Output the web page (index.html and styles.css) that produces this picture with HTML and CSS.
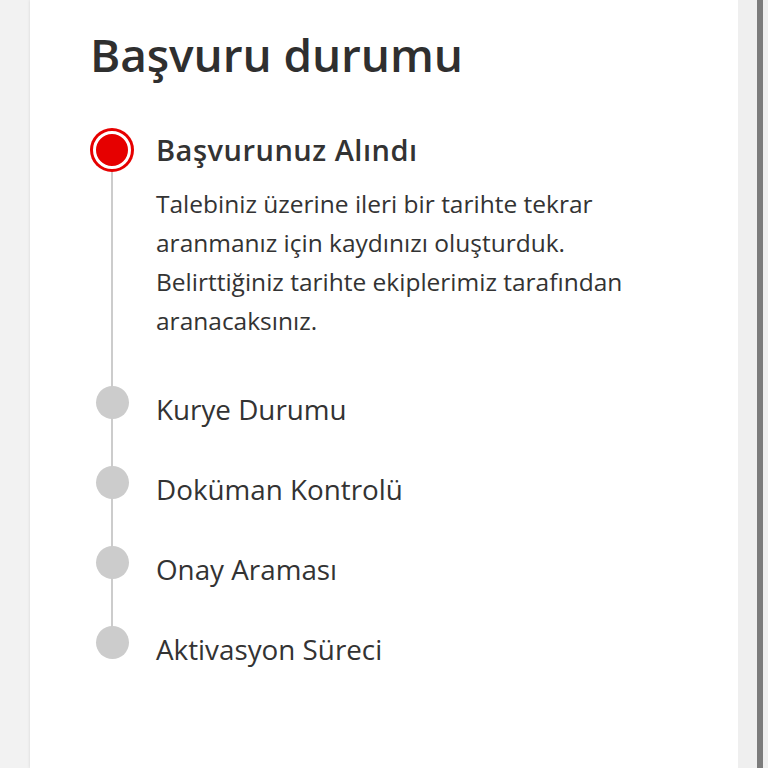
FILE: index.html
```html
<!DOCTYPE html>
<html lang="tr">
<head>
    <meta charset="UTF-8">
    <meta name="viewport" content="width=device-width, initial-scale=1.0">
    <title>Başvuru durumu</title>
    <link rel="stylesheet" href="styles.css">
</head>
<body>
    <div class="page">
        <div class="card">
            <h1 class="title">Başvuru durumu</h1>

            <ol class="steps">
                <li class="step active">
                    <span class="marker"></span>
                    <div class="step-body">
                        <h2 class="step-title">Başvurunuz Alındı</h2>
                        <p class="step-text">Talebiniz üzerine ileri bir tarihte tekrar aranmanız için kaydınızı oluşturduk. Belirttiğiniz tarihte ekiplerimiz tarafından aranacaksınız.</p>
                    </div>
                </li>
                <li class="step">
                    <span class="marker"></span>
                    <div class="step-body">Kurye Durumu</div>
                </li>
                <li class="step">
                    <span class="marker"></span>
                    <div class="step-body">Doküman Kontrolü</div>
                </li>
                <li class="step">
                    <span class="marker"></span>
                    <div class="step-body">Onay Araması</div>
                </li>
                <li class="step">
                    <span class="marker"></span>
                    <div class="step-body">Aktivasyon Süreci</div>
                </li>
            </ol>
        </div>
        <div class="scroll-track">
            <div class="scroll-thumb"></div>
        </div>
    </div>
</body>
</html>
```

FILE: styles.css
```css
html, body {
    margin: 0;
    padding: 0;
}
body {
    font-family: "Open Sans", "DejaVu Sans", sans-serif;
    background-color: #f2f2f2;
    color: #333;
    overflow: hidden;
}
.page {
    display: grid;
    grid-template-columns: 708px 30px;
    height: 768px;
    padding-left: 30px;
}
.card {
    background-color: #fff;
    box-shadow: 0 0 3px rgba(0, 0, 0, 0.12);
    padding: 24px 0 0 60px;
    box-sizing: border-box;
}
.title {
    margin: 0;
    font-size: 46px;
    font-weight: 600;
    line-height: 60px;
    color: #2f2f2f;
    letter-spacing: -0.1px;
}
.steps {
    list-style: none;
    margin: 44px 0 0;
    padding: 0;
    position: relative;
}
.steps::before {
    content: "";
    position: absolute;
    left: 21px;
    top: 30px;
    bottom: 62px;
    width: 2px;
    background-color: #ccc;
}
.step {
    display: grid;
    grid-template-columns: 44px 1fr;
    column-gap: 22px;
    position: relative;
    min-height: 80px;
}
.marker {
    justify-self: center;
    width: 33px;
    height: 33px;
    border-radius: 50%;
    background-color: #ccc;
    position: relative;
    z-index: 1;
}
.step.active .marker {
    width: 32px;
    height: 32px;
    margin-top: 3px;
    background-color: #e60000;
    border: 3px solid #fff;
    box-shadow: 0 0 0 3px #e60000;
}
.step-body {
    font-size: 27.8px;
    line-height: 40px;
    padding-top: 3px;
}
.step.active .step-body {
    padding-top: 0;
    padding-bottom: 46px;
}
.step-title {
    margin: 0;
    font-size: 29px;
    font-weight: 600;
    line-height: 44px;
    letter-spacing: 0.5px;
}
.step-text {
    margin: 12px 0 0;
    font-size: 24.5px;
    line-height: 39px;
    max-width: 490px;
}
.scroll-track {
    background-color: #efefef;
    padding-left: 19px;
}
.scroll-thumb {
    width: 6px;
    height: 768px;
    background-color: #7c7c7c;
}
```
